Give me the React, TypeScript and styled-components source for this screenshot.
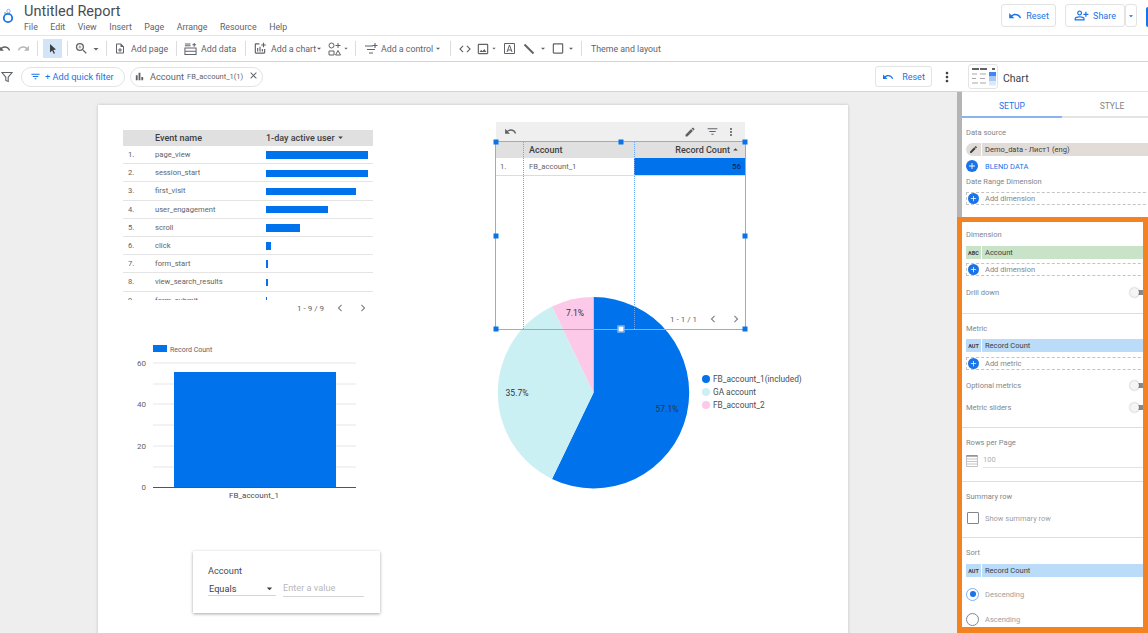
import styled, { createGlobalStyle } from 'styled-components';
import {
  MdUndo, MdRedo, MdZoomIn, MdArrowDropDown, MdArrowDropUp, MdOutlineNoteAdd, MdOutlineAddchart, MdCode,
  MdOutlineImage, MdCheckBoxOutlineBlank, MdFilterList, MdClose, MdBarChart, MdMoreVert, MdEdit,
  MdOutlinePersonAddAlt, MdChevronLeft, MdChevronRight, MdAdd,
} from 'react-icons/md';

const GlobalStyle = createGlobalStyle`
  html, body { margin: 0; padding: 0; background: #fff; }
  body { font-family: Roboto, "Liberation Sans", sans-serif; color: #5f6368; }
`;

const Root = styled.div`
  position: relative;
  width: 1148px;
  height: 633px;
  overflow: hidden;
  display: flex;
  flex-direction: column;
`;

/* ---- top bar ---- */
const TopBar = styled.header`
  height: 36px;
  box-sizing: border-box;
  flex: none;
  display: flex;
  align-items: flex-start;
  border-bottom: 1px solid #e4e4e4;
`;
const LogoBox = styled.div`
  width: 16px;
  height: 35px;
  margin-right: 8px;
  flex: none;
`;
const TitleBlock = styled.div`
  flex: 1;
  padding-top: 3px;
`;
const Title = styled.div`
  font-size: 14.5px;
  line-height: 18px;
  color: #4a4d51;
`;
const Menu = styled.nav`
  display: flex;
  gap: 12.5px;
  font-size: 8.8px;
  line-height: 12px;
`;
const ActionBtn = styled.button`
  height: 23px;
  display: flex;
  align-items: center;
  justify-content: center;
  gap: 4px;
  width: ${p => p.$w}px;
  margin: 4px ${p => p.$mr || 0}px 0 0;
  padding: 0;
  background: #fff;
  border: 1px solid #e3e3e3;
  border-radius: 3px;
  color: #1a73e8;
  font: 400 9px Roboto, sans-serif;
`;
const EdgeBlue = styled.div`
  width: 2px;
  height: 20px;
  margin-top: 7px;
  background: #1a73e8;
  border-radius: 2px 0 0 2px;
`;

/* ---- tool bar ---- */
const ToolBar = styled.div`
  height: 26px;
  box-sizing: border-box;
  flex: none;
  display: flex;
  align-items: center;
  margin-left: -6px;
  border-bottom: 1px solid #d4d4d4;
  font-size: 8.8px;
`;
const Tool = styled.span`
  width: ${p => p.$w}px;
  margin-left: ${p => p.$ml || 0}px;
  flex: none;
  height: 19px;
  display: flex;
  align-items: center;
  justify-content: center;
  color: ${p => p.$muted ? '#b5b7ba' : '#5f6368'};
  background: ${p => p.$active ? '#d3e3f8' : 'transparent'};
`;
const ToolText = styled.span`
  width: ${p => p.$w}px;
  margin-left: ${p => p.$ml || 0}px;
  flex: none;
  white-space: nowrap;
`;
const Sep = styled.span`
  width: 1px;
  height: 15px;
  flex: none;
  background: #dcdcdc;
  margin: 0 ${p => p.$r}px 0 ${p => p.$l}px;
`;

/* ---- main area ---- */
const Main = styled.div`
  flex: 1;
  display: flex;
  min-height: 0;
`;
const LeftColumn = styled.div`
  width: 962px;
  flex: none;
  display: flex;
  flex-direction: column;
`;
const FilterBar = styled.div`
  height: 30px;
  box-sizing: border-box;
  flex: none;
  display: flex;
  align-items: center;
  border-bottom: 1px solid #d4d4d4;
  color: #5f6368;
`;
const FunnelBox = styled.span`
  width: 21px;
  padding-left: 1px;
  box-sizing: border-box;
  display: flex;
  flex: none;
`;
const Pill = styled.div`
  height: 20px;
  box-sizing: border-box;
  width: ${p => p.$w}px;
  margin-right: 5px;
  padding-left: ${p => p.$pl}px;
  display: flex;
  align-items: center;
  border: 1px solid #e3e3e3;
  border-radius: 10px;
  font-size: 9.2px;
  flex: none;
`;
const QuickText = styled.span`
  color: #1a73e8;
  margin-left: 4px;
`;
const PillLabel = styled.span`
  margin-left: 5px;
`;
const SmallNote = styled.span`
  font-size: 7.5px;
  margin-left: 3px;
  white-space: nowrap;
`;
const ResetFilter = styled(ActionBtn)`
  margin: 0 0 0 auto;
  height: 21px;
  gap: 8px;
`;
const KebabBox = styled.span`
  width: 30px;
  display: flex;
  justify-content: center;
  color: #3c4043;
`;

const Canvas = styled.main`
  position: relative;
  flex: 1;
  background: #eeeeee;
  overflow: hidden;
`;
const ScrollThumb = styled.div`
  position: absolute;
  right: 0;
  top: 0;
  bottom: 0;
  width: 5px;
  background: #b4b4b4;
`;
const Page = styled.section`
  position: relative;
  width: 750px;
  height: 600px;
  margin: 13px 0 0 98px;
  background: #fff;
  box-shadow: 0 0 3px rgba(0, 0, 0, 0.2);
`;

/* ---- event table ---- */
const EventTable = styled.div`
  position: absolute;
  left: 25px;
  top: 25px;
  width: 250px;
`;
const EventHead = styled.div`
  height: 16px;
  box-sizing: border-box;
  padding-bottom: 1px;
  display: grid;
  grid-template-columns: 32px 111px 1fr;
  align-items: center;
  background: #e0e0e0;
  font-size: 9px;
  font-weight: 500;
  color: #3c4043;
`;
const HeadCell = styled.span`
  display: flex;
  align-items: center;
  white-space: nowrap;
  padding-left: ${p => p.$pl || 0}px;
`;
const EventBody = styled.div`
  height: 154px;
  overflow: hidden;
`;
const EventRow = styled.div`
  height: 18.2px;
  box-sizing: border-box;
  display: grid;
  grid-template-columns: 32px 111px 1fr;
  align-items: center;
  border-bottom: 1px solid #e4e4e4;
  font-size: 7.6px;
  color: #5f6368;
`;
const RowNum = styled.span`
  padding-left: 5px;
`;
const Bar = styled.div`
  height: 7.5px;
  background: #0072ec;
  margin-top: 1px;
`;
const Pager = styled.div`
  height: 16px;
  display: flex;
  align-items: center;
  justify-content: flex-end;
  gap: 9px;
  font-size: 8px;
  color: #5f6368;
  padding-right: 3px;
`;
const PagerArrows = styled.span`
  display: flex;
  gap: 9px;
  color: #80868b;
`;

/* ---- bar chart ---- */
const BarChartBox = styled.svg`
  position: absolute;
  left: 30px;
  top: 235px;
`;

/* ---- filter control ---- */
const ControlCard = styled.div`
  position: absolute;
  left: 95px;
  top: 446px;
  width: 187px;
  height: 62px;
  box-sizing: border-box;
  padding: 14px 16px 0 15px;
  background: #fff;
  box-shadow: 0 1px 3px rgba(0, 0, 0, 0.35);
  font-size: 9.2px;
  color: #4a4d51;
`;
const ControlInputs = styled.div`
  display: flex;
  gap: 7px;
  margin-top: 5px;
`;
const SelectBox = styled.div`
  width: 68px;
  height: 15px;
  display: flex;
  align-items: center;
  justify-content: space-between;
  padding-left: 1px;
  box-sizing: border-box;
  border-bottom: 1px solid #d5d5d5;
  color: #3c4043;
`;
const ValueBox = styled.div`
  flex: 1;
  height: 15px;
  border-bottom: 1px solid #d5d5d5;
  color: #b8b8b8;
  line-height: 13px;
`;

/* ---- selected table ---- */
const ChartToolbar = styled.div`
  position: absolute;
  left: 398px;
  top: 17px;
  width: 249px;
  height: 19px;
  box-sizing: border-box;
  padding: 0 8px;
  display: flex;
  align-items: center;
  background: #efefef;
  color: #5f6368;
`;
const ToolbarRight = styled.span`
  margin-left: auto;
  display: flex;
  align-items: center;
  gap: 10px;
`;
const Kebab = styled(MdMoreVert)`
  margin-left: -4px;
`;
const AccountTable = styled.div`
  position: absolute;
  left: 397px;
  top: 36px;
  width: 251px;
  height: 189px;
  font-size: 7.6px;
`;
const AccountHead = styled.div`
  height: 16px;
  box-sizing: border-box;
  padding-bottom: 1px;
  margin-top: 1px;
  display: grid;
  grid-template-columns: 28px 111px 1fr;
  align-items: center;
  background: #e0e0e0;
  font-size: 9px;
  font-weight: 500;
  color: #3c4043;
`;
const RightCell = styled.span`
  display: flex;
  justify-content: flex-end;
  align-items: center;
  padding-right: 5px;
`;
const AccountRow = styled.div`
  height: 17px;
  display: grid;
  grid-template-columns: 28px 111px 1fr;
  align-items: center;
  border-bottom: 1px solid #dcdcdc;
`;
const AccountName = styled.span`
  padding-left: 6px;
  padding-bottom: 1px;
`;
const ValueCell = styled.span`
  height: 100%;
  background: #0072ec;
  color: #123;
  display: flex;
  align-items: center;
  justify-content: flex-end;
  padding-right: 5px;
  font-size: 8px;
`;
const TablePager = styled(Pager)`
  position: absolute;
  right: 0;
  bottom: 1px;
  height: 20px;
`;
const PieBox = styled.div`
  position: absolute;
  left: 398px;
  top: 190px;
  width: 310px;
  display: flex;
`;
const PieLegend = styled.ul`
  list-style: none;
  margin: 77px 0 0 8px;
  padding: 0;
  font-size: 8.3px;
  color: #4a4d51;
`;
const LegendItem = styled.li`
  height: 13px;
  display: flex;
  align-items: center;
  gap: 3px;
  white-space: nowrap;
`;
const LegendDot = styled.i`
  width: 8px;
  height: 8px;
  border-radius: 50%;
  background: ${p => p.$c};
`;
const Selection = styled.div`
  position: absolute;
  left: 397px;
  top: 36px;
  width: 251px;
  height: 189px;
  box-sizing: border-box;
  border: 1px solid #7fb0f3;
`;
const GuideLine = styled.div`
  position: absolute;
  top: 0;
  bottom: 0;
  left: ${p => p.$x}px;
  border-left: 1px dotted #6aa8f5;
`;
const Handle = styled.div`
  position: absolute;
  width: 5px;
  height: 5px;
  transform: translate(-50%, -50%);
  left: ${p => p.$x}%;
  top: ${p => p.$y}%;
  background: ${p => p.$hollow ? '#fff' : '#0b73e8'};
  border: ${p => p.$hollow ? '1px solid #3b8cf0' : 'none'};
`;

/* ---- right panel ---- */
const Panel = styled.aside`
  width: 186px;
  flex: none;
  overflow: hidden;
  background: #fff;
  font-size: 7.5px;
  color: #80868b;
`;
const PanelHead = styled.div`
  height: 30px;
  box-sizing: border-box;
  display: flex;
  align-items: center;
  gap: 5px;
  padding-left: 6px;
  font-size: 10.5px;
  color: #3c4043;
  border-bottom: 1px solid #e4e4e4;
`;
const PanelTitle = styled.span`
  padding-top: 3px;
`;
const Thumb = styled.svg`
  border: 1px solid #e4e4e4;
  border-radius: 3px;
`;
const Tabs = styled.div`
  height: 26px;
  box-sizing: border-box;
  display: flex;
  border-bottom: 2px solid #e4e4e4;
`;
const Tab = styled.div`
  width: 100px;
  flex: none;
  box-sizing: border-box;
  padding-top: 4px;
  margin-bottom: -2px;
  display: flex;
  align-items: center;
  justify-content: center;
  font-size: 8.5px;
  color: ${p => p.$active ? '#1a73e8' : '#80868b'};
  border-bottom: 2px solid ${p => p.$active ? '#8ab4f0' : 'transparent'};
`;
const PanelBody = styled.div`
  padding-left: 4px;
  width: 200px;
`;
const Label = styled.div`
  height: 10px;
  line-height: 10px;
  margin-top: ${p => p.$mt}px;
`;
const Chip = styled.div`
  height: 13px;
  margin-top: ${p => p.$mt}px;
  display: flex;
  align-items: center;
  background: ${p => p.$bg};
  color: #3c4043;
  border-radius: ${p => p.$round ? '7px 0 0 7px' : '0'};
`;
const ChipTag = styled.span`
  width: 15px;
  height: 13px;
  flex: none;
  display: flex;
  align-items: center;
  justify-content: center;
  border-right: 1px solid #fff;
  margin-right: 3px;
  font-size: 5.5px;
  font-weight: 700;
  color: #3c4043;
`;
const BlendRow = styled.div`
  height: 14px;
  margin-top: 3px;
  display: flex;
  align-items: center;
  gap: 7px;
  color: #1a73e8;
`;
const HelpDot = styled.span`
  width: 7px;
  height: 7px;
  margin-left: 117px;
  border: 1px solid #80868b;
  border-radius: 50%;
`;
const RoundPlus = styled.span`
  width: ${p => p.$s || 11}px;
  height: ${p => p.$s || 11}px;
  flex: none;
  display: flex;
  align-items: center;
  justify-content: center;
  border-radius: 50%;
  background: #1a73e8;
  color: #fff;
`;
const DashedAdd = styled.div`
  height: 13px;
  margin-top: ${p => p.$mt}px;
  box-sizing: border-box;
  display: flex;
  align-items: center;
  gap: 6px;
  padding-left: 1px;
  border: 1px dashed #c4c4c4;
`;
const SwitchRow = styled.div`
  width: 180px;
  height: 10px;
  margin-top: ${p => p.$mt}px;
  display: flex;
  align-items: center;
  justify-content: space-between;
`;
const SwitchTrack = styled.span`
  position: relative;
  width: 13px;
  height: 5px;
  background: #8a8a8a;
  border-radius: 3px 0 0 3px;
`;
const SwitchKnob = styled.span`
  position: absolute;
  left: -3px;
  top: -2px;
  width: 9px;
  height: 9px;
  border-radius: 50%;
  background: #f5f5f5;
  box-shadow: 0 0 2px rgba(0, 0, 0, 0.4);
`;
const Divider = styled.div`
  height: 1px;
  margin: ${p => p.$mt}px 0 0 -4px;
  background: #dedede;
`;
const RowsInput = styled.div`
  height: 14px;
  margin-top: 6px;
  display: flex;
  align-items: center;
  gap: 5px;
  color: #b0b0b0;
`;
const RowsValue = styled.span`
  width: 165px;
  height: 14px;
  line-height: 12px;
  box-sizing: border-box;
  border-bottom: 1px solid #e4e4e4;
`;
const OptionRow = styled.div`
  height: 12px;
  margin-top: ${p => p.$mt}px;
  display: flex;
  align-items: center;
  gap: 6px;
  color: #a0a0a0;
`;
const CheckBox = styled.span`
  width: 10px;
  height: 10px;
  margin-left: 1px;
  flex: none;
  border: 1px solid #80868b;
  border-radius: 1px;
`;
const Radio = styled.span`
  width: 11px;
  height: 11px;
  flex: none;
  display: flex;
  align-items: center;
  justify-content: center;
  border-radius: 50%;
  border: 1px solid ${p => p.$on ? '#7fb0f3' : '#80868b'};
  &::after {
    content: '';
    width: 6px;
    height: 6px;
    border-radius: 50%;
    background: ${p => p.$on ? '#1a73e8' : 'transparent'};
  }
`;
const OrangeFrame = styled.div`
  position: absolute;
  left: 957px;
  top: 217px;
  width: 191px;
  height: 416px;
  box-sizing: border-box;
  border: 5px solid #f58220;
  border-bottom-width: 6px;
`;

const events = [
  ['page_view', 102], ['session_start', 102], ['first_visit', 90], ['user_engagement', 61.5],
  ['scroll', 34], ['click', 5], ['form_start', 2], ['view_search_results', 2], ['form_submit', 1],
] as const;

// pie slice path, angles in degrees clockwise from the top
function slice(from: number, to: number) {
  const r = 95.7, cx = 97.5, cy = 97.7;
  const pt = (a: number) => {
    const t = (a * Math.PI) / 180;
    return `${(cx + r * Math.sin(t)).toFixed(2)} ${(cy - r * Math.cos(t)).toFixed(2)}`;
  };
  return `M${cx} ${cy}L${pt(from)}A${r} ${r} 0 ${to - from > 180 ? 1 : 0} 1 ${pt(to)}Z`;
}

const Logo = () => (
  <svg width="16" height="35" viewBox="0 0 16 35">
    <circle cx="8" cy="18" r="4.2" fill="none" stroke="#1a73e8" strokeWidth="1.8" />
    <circle cx="8.5" cy="11" r="1.7" fill="none" stroke="#8ab4f8" strokeWidth="1" />
    <circle cx="5" cy="13" r="0.9" fill="#9aa0a6" />
  </svg>
);

const Caret = ({ size = 12 }: { size?: number }) => <MdArrowDropDown size={size} />;

const Arrows = () => (
  <PagerArrows>
    <MdChevronLeft size={14} />
    <MdChevronRight size={14} />
  </PagerArrows>
);

export default function App() {
  return (
    <Root>
      <GlobalStyle />
      <TopBar>
        <LogoBox><Logo /></LogoBox>
        <TitleBlock>
          <Title>Untitled Report</Title>
          <Menu>
            {['File', 'Edit', 'View', 'Insert', 'Page', 'Arrange', 'Resource', 'Help'].map(m => <span key={m}>{m}</span>)}
          </Menu>
        </TitleBlock>
        <ActionBtn $w={55} $mr={9}><MdUndo size={14} />Reset</ActionBtn>
        <ActionBtn $w={60}><MdOutlinePersonAddAlt size={15} />Share</ActionBtn>
        <ActionBtn $w={12} $mr={9}><Caret size={10} /></ActionBtn>
        <EdgeBlue />
      </TopBar>

      <ToolBar>
        <Tool $w={20}><MdUndo size={13} /></Tool>
        <Tool $w={19} $muted><MdRedo size={13} /></Tool>
        <Sep $l={4} $r={5} />
        <Tool $w={19} $active>
          <svg width="10" height="10" viewBox="0 0 10 10"><path d="M2 0l6 5.6-2.6.3 1.6 3.3-1.3.6-1.5-3.3L2 8.4z" fill="#3c4043" /></svg>
        </Tool>
        <Sep $l={5} $r={5} />
        <Tool $w={16}><MdZoomIn size={15} /></Tool>
        <Tool $w={14}><Caret /></Tool>
        <Sep $l={3} $r={7} />
        <Tool $w={12}><MdOutlineNoteAdd size={15} /></Tool>
        <ToolText $w={37} $ml={5}>Add page</ToolText>
        <Sep $l={8} $r={7} />
        <Tool $w={13}>
          <svg width="14" height="14" viewBox="0 0 14 14" fill="none" stroke="#5f6368" strokeWidth="1.1"><path d="M1 3.5h6M1 1.5h6M1 6h12v7H1zM1 9.5h12M11 0.5v4M9 2.5h4" /></svg>
        </Tool>
        <ToolText $w={35} $ml={4}>Add data</ToolText>
        <Sep $l={9} $r={7} />
        <Tool $w={14}><MdOutlineAddchart size={15} /></Tool>
        <ToolText $w={43} $ml={4}>Add a chart</ToolText>
        <Tool $w={10}><Caret size={11} /></Tool>
        <Tool $w={16} $ml={2}>
          <svg width="13" height="14" viewBox="0 0 13 14" fill="none" stroke="#5f6368" strokeWidth="1"><circle cx="3.5" cy="3.5" r="2.5" /><path d="M10 1v5M7.5 3.5h5M1 9h5v4H1zM10 8.5l2.5 4.5h-5z" /></svg>
        </Tool>
        <Tool $w={8}><Caret size={11} /></Tool>
        <Sep $l={5} $r={8} />
        <Tool $w={14}>
          <svg width="14" height="13" viewBox="0 0 14 13" fill="none" stroke="#5f6368" strokeWidth="1.1"><path d="M1 4h8M3 7.5h8M5 11h4M11 1v5M8.5 3.5h5" /></svg>
        </Tool>
        <ToolText $w={52} $ml={3}>Add a control</ToolText>
        <Tool $w={10}><Caret size={11} /></Tool>
        <Sep $l={7} $r={6} />
        <Tool $w={16}><MdCode size={14} /></Tool>
        <Tool $w={15} $ml={2}><MdOutlineImage size={14} /></Tool>
        <Tool $w={8}><Caret size={11} /></Tool>
        <Tool $w={14} $ml={4}>
          <svg width="13" height="13" viewBox="0 0 13 13" fill="none" stroke="#5f6368" strokeWidth="1"><path d="M1.5 1.5h10v10h-10z" /><path d="M4 10l2.5-7L9 10M4.8 8h3.4" /></svg>
        </Tool>
        <Tool $w={14} $ml={6}>
          <svg width="12" height="12" viewBox="0 0 12 12"><path d="M1.5 1.5l9 9" stroke="#5f6368" strokeWidth="2" /></svg>
        </Tool>
        <Tool $w={10} $ml={2}><Caret size={11} /></Tool>
        <Tool $w={14} $ml={3}><MdCheckBoxOutlineBlank size={15} /></Tool>
        <Tool $w={10} $ml={1}><Caret size={11} /></Tool>
        <Sep $l={5} $r={9} />
        <ToolText $w={72}>Theme and layout</ToolText>
      </ToolBar>

      <Main>
        <LeftColumn>
          <FilterBar>
            <FunnelBox>
              <svg width="12" height="12" viewBox="0 0 12 12" fill="none" stroke="#5f6368" strokeWidth="1.1"><path d="M1 1.5h10L7.2 6.2v4.3l-2.4-1V6.2z" /></svg>
            </FunnelBox>
            <Pill $w={104} $pl={8}>
              <MdFilterList size={11} color="#1a73e8" />
              <QuickText>+ Add quick filter</QuickText>
            </Pill>
            <Pill $w={133} $pl={3}>
              <MdBarChart size={11} />
              <PillLabel>Account</PillLabel>
              <SmallNote>FB_account_1(1)</SmallNote>
              <PillLabel><MdClose size={11} /></PillLabel>
            </Pill>
            <ResetFilter $w={57}><MdUndo size={12} />Reset</ResetFilter>
            <KebabBox><MdMoreVert size={16} /></KebabBox>
          </FilterBar>

          <Canvas>
            <Page>
              <EventTable>
                <EventHead>
                  <span />
                  <HeadCell>Event name</HeadCell>
                  <HeadCell>1-day active user<MdArrowDropDown size={11} /></HeadCell>
                </EventHead>
                <EventBody>
                  {events.map(([name, w], i) => (
                    <EventRow key={name}>
                      <RowNum>{i + 1}.</RowNum>
                      <span>{name}</span>
                      <Bar style={{ width: w }} />
                    </EventRow>
                  ))}
                </EventBody>
                <Pager>1 - 9 / 9<Arrows /></Pager>
              </EventTable>

              <BarChartBox width="240" height="165" viewBox="0 0 240 165" fontFamily="Roboto, sans-serif">
                <rect x="25" y="5" width="14" height="7" fill="#0072ec" />
                <text x="42" y="11.5" fontSize="7" fill="#5f6368">Record Count</text>
                {[23, 44, 64, 85, 106, 127].map(y => <line key={y} x1="25" x2="228" y1={y} y2={y} stroke="#e6e6e6" />)}
                <rect x="46" y="32" width="162" height="115" fill="#0072ec" />
                <line x1="25" x2="228" y1="147.5" y2="147.5" stroke="#555" />
                {[['60', 26], ['40', 67], ['20', 109], ['0', 150]].map(([t, y]) => (
                  <text key={t} x="18" y={y} fontSize="8" textAnchor="end" fill="#5f6368">{t}</text>
                ))}
                <text x="126" y="158" fontSize="8" textAnchor="middle" fill="#4a4d51">FB_account_1</text>
              </BarChartBox>

              <ControlCard>
                Account
                <ControlInputs>
                  <SelectBox>Equals<MdArrowDropDown size={13} color="#3c4043" /></SelectBox>
                  <ValueBox>Enter a value</ValueBox>
                </ControlInputs>
              </ControlCard>

              <ChartToolbar>
                <MdUndo size={13} />
                <ToolbarRight>
                  <MdEdit size={12} />
                  <MdFilterList size={13} />
                  <Kebab size={12} />
                </ToolbarRight>
              </ChartToolbar>

              <AccountTable>
                <AccountHead>
                  <span />
                  <HeadCell $pl={6}>Account</HeadCell>
                  <RightCell>Record Count<MdArrowDropUp size={11} /></RightCell>
                </AccountHead>
                <AccountRow>
                  <RowNum>1.</RowNum>
                  <AccountName>FB_account_1</AccountName>
                  <ValueCell>56</ValueCell>
                </AccountRow>
                <TablePager>1 - 1 / 1<Arrows /></TablePager>
              </AccountTable>

              <PieBox>
                <svg width="198" height="200" viewBox="0 0 198 200" fontFamily="Roboto, sans-serif" fontSize="8.6" fill="#333">
                  <path d={slice(0, 205.7)} fill="#0072ec" />
                  <path d={slice(205.7, 334.3)} fill="#cbf0f3" />
                  <path d={slice(334.3, 360)} fill="#fdc9e8" />
                  <text x="79" y="21" textAnchor="middle">7.1%</text>
                  <text x="21" y="101" textAnchor="middle">35.7%</text>
                  <text x="171" y="117" textAnchor="middle">57.1%</text>
                </svg>
                <PieLegend>
                  <LegendItem><LegendDot $c="#0072ec" />FB_account_1(included)</LegendItem>
                  <LegendItem><LegendDot $c="#cbf0f3" />GA account</LegendItem>
                  <LegendItem><LegendDot $c="#fdc9e8" />FB_account_2</LegendItem>
                </PieLegend>
              </PieBox>

              <Selection>
                <GuideLine $x={27} />
                <GuideLine $x={138} />
                <Handle $x={0} $y={0} />
                <Handle $x={50} $y={0} />
                <Handle $x={100} $y={0} />
                <Handle $x={0} $y={50} />
                <Handle $x={100} $y={50} />
                <Handle $x={0} $y={100} />
                <Handle $x={50} $y={100} $hollow />
                <Handle $x={100} $y={100} />
              </Selection>
            </Page>
            <ScrollThumb />
          </Canvas>
        </LeftColumn>

        <Panel>
          <PanelHead>
            <Thumb width="28" height="23" viewBox="0 0 28 23">
              <path d="M3 4h7M11 4h7M23 4h3" stroke="#5f6368" strokeWidth="2" />
              <path d="M3 9h5M11 9h6M3 13.5h4M11 13.5h5M3 18h6M11 18h6" stroke="#a8a8a8" strokeWidth="1.2" />
              <rect x="20" y="7" width="7" height="4.5" fill="#4285f4" />
              <rect x="20" y="11.5" width="7" height="4.5" fill="#a9c9f5" />
              <rect x="20" y="16" width="7" height="4.5" fill="#dce9fb" />
            </Thumb>
            <PanelTitle>Chart</PanelTitle>
          </PanelHead>
          <Tabs>
            <Tab $active>SETUP</Tab>
            <Tab>STYLE</Tab>
          </Tabs>
          <PanelBody>
            <Label $mt={10}>Data source</Label>
            <Chip $mt={5} $bg="#e1dcd8" $round>
              <ChipTag><MdEdit size={9} /></ChipTag>
              Demo_data - Лист1 (eng)
            </Chip>
            <BlendRow>
              <RoundPlus $s={12}><MdAdd size={10} /></RoundPlus>
              BLEND DATA
              <HelpDot />
            </BlendRow>
            <Label $mt={4}>Date Range Dimension</Label>
            <DashedAdd $mt={5}><RoundPlus><MdAdd size={9} /></RoundPlus>Add dimension</DashedAdd>

            <Label $mt={25}>Dimension</Label>
            <Chip $mt={6} $bg="#c8e3c8"><ChipTag>ABC</ChipTag>Account</Chip>
            <DashedAdd $mt={4}><RoundPlus><MdAdd size={9} /></RoundPlus>Add dimension</DashedAdd>
            <SwitchRow $mt={11}>Drill down<SwitchTrack><SwitchKnob /></SwitchTrack></SwitchRow>
            <Divider $mt={16} />
            <Label $mt={10}>Metric</Label>
            <Chip $mt={5} $bg="#bbdcf9"><ChipTag>AUT</ChipTag>Record Count</Chip>
            <DashedAdd $mt={5}><RoundPlus><MdAdd size={9} /></RoundPlus>Add metric</DashedAdd>
            <SwitchRow $mt={10}>Optional metrics<SwitchTrack><SwitchKnob /></SwitchTrack></SwitchRow>
            <SwitchRow $mt={12}>Metric sliders<SwitchTrack><SwitchKnob /></SwitchTrack></SwitchRow>
            <Divider $mt={15} />
            <Label $mt={10}>Rows per Page</Label>
            <RowsInput>
              <svg width="12" height="12" viewBox="0 0 12 12" fill="none" stroke="#c4c4c4"><path d="M.5.5h11v11H.5zM.5 4h11M.5 6.5h11M.5 9h11" /><path d="M.5 1h11" stroke="#5f6368" /></svg>
              <RowsValue>100</RowsValue>
            </RowsInput>
            <Divider $mt={13} />
            <Label $mt={10}>Summary row</Label>
            <OptionRow $mt={10}><CheckBox />Show summary row</OptionRow>
            <Divider $mt={13} />
            <Label $mt={10}>Sort</Label>
            <Chip $mt={6} $bg="#bbdcf9"><ChipTag>AUT</ChipTag>Record Count</Chip>
            <OptionRow $mt={11}><Radio $on />Descending</OptionRow>
            <OptionRow $mt={13}><Radio />Ascending</OptionRow>
          </PanelBody>
        </Panel>
      </Main>
      <OrangeFrame />
    </Root>
  );
}
